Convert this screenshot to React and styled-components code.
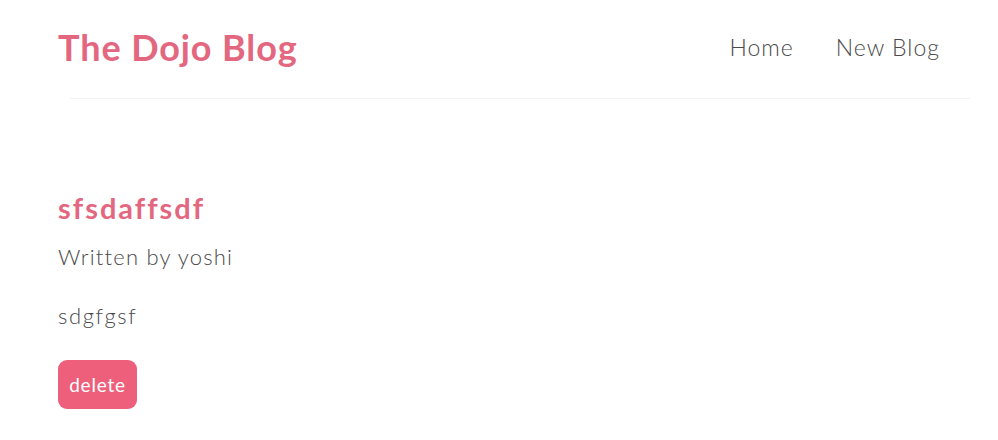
import React from "react";
import styled, { createGlobalStyle } from "styled-components";

const GlobalStyle = createGlobalStyle`
  * {
    margin: 0;
    box-sizing: border-box;
  }
  body {
    font-family: "Lato", "Open Sans", sans-serif;
    color: #4a4a4a;
    background: #fff;
  }
`;

function App() {
  return (
    <>
      <GlobalStyle />
      <Page>
        <Navbar>
          <Brand>The Dojo Blog</Brand>
          <Links>
            <NavLink href="#">Home</NavLink>
            <NavLink href="#">New Blog</NavLink>
          </Links>
        </Navbar>
        <Divider />
        <Content>
          <BlogDetails>
            <BlogTitle>sfsdaffsdf</BlogTitle>
            <Author>Written by yoshi</Author>
            <Body>sdgfgsf</Body>
            <DeleteButton>delete</DeleteButton>
          </BlogDetails>
        </Content>
      </Page>
    </>
  );
}

export default App;

const Page = styled.div`
  width: 998px;
  height: 440px;
  overflow: hidden;
`;

const Navbar = styled.nav`
  display: flex;
  align-items: center;
  justify-content: space-between;
  padding: 22px 58px 0 58px;
  height: 72px;
`;

const Brand = styled.h1`
  font-size: 36px;
  font-weight: 700;
  color: #e3677f;
  letter-spacing: 0.9px;
`;

const Links = styled.div`
  display: flex;
  gap: 42px;
`;

const NavLink = styled.a`
  font-size: 23px;
  font-weight: 300;
  letter-spacing: 1px;
  color: #4a4a4a;
  text-decoration: none;
`;

const Divider = styled.div`
  margin: 26px 28px 0 70px;
  border-bottom: 1px solid #f3f3f3;
`;

const Content = styled.div`
  padding: 94px 58px 0;
`;

const BlogDetails = styled.article``;

const BlogTitle = styled.h2`
  font-size: 29px;
  font-weight: 700;
  letter-spacing: 2px;
  color: #e3677f;
  line-height: 1;
`;

const Author = styled.p`
  font-size: 22px;
  font-weight: 300;
  letter-spacing: 1.2px;
  margin-top: 24px;
  line-height: 1;
`;

const Body = styled.div`
  font-size: 22px;
  font-weight: 300;
  letter-spacing: 1.6px;
  margin-top: 37px;
  line-height: 1;
`;

const DeleteButton = styled.button`
  display: block;
  margin-top: 33px;
  height: 49px;
  width: 79px;
  padding: 0;
  border: none;
  border-radius: 9px;
  background: #ee5f7c;
  color: #fff;
  font-family: inherit;
  font-size: 19px;
  letter-spacing: 0.8px;
  cursor: pointer;
`;
